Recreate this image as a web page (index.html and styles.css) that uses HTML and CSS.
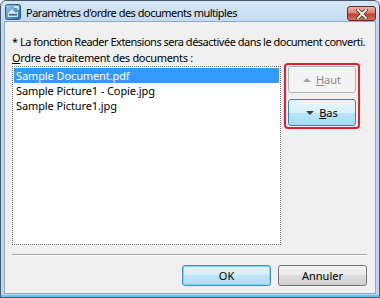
FILE: index.html
```html
<!DOCTYPE html>
<html lang="fr">
  <head>
    <meta charset="UTF-8" />
    <meta name="viewport" content="width=device-width, initial-scale=1.0" />
    <title>Paramètres d'ordre des documents multiples</title>
    <link rel="stylesheet" href="styles.css">
  </head>
  <body>
    <div class="window">
      <div class="titlebar">
        <svg class="app-icon" width="16" height="16" viewBox="0 0 16 16">
          <defs>
            <linearGradient id="ig" x1="0" y1="0" x2="1" y2="1">
              <stop offset="0" stop-color="#9fd0f4" />
              <stop offset="1" stop-color="#1f5fa8" />
            </linearGradient>
          </defs>
          <rect x="0.5" y="0.5" width="15" height="15" rx="2" fill="url(#ig)" stroke="#2a5a8c" />
          <path d="M3 9 L7 5 L11 9 L13 7 L13 13 L3 13 Z" fill="#e8f2fb" opacity="0.85" />
          <rect x="4" y="10" width="8" height="1.5" fill="#2a5a8c" />
          <path d="M9 3 L13 3 L13 6" fill="none" stroke="#ffffff" stroke-width="1.3" />
        </svg>
        <span class="title">Paramètres d'ordre des documents multiples</span>
        <div class="close-btn">
          <svg width="12" height="10" viewBox="0 0 12 10">
            <path d="M2 1 L10 9 M10 1 L2 9" stroke="#5a2a22" stroke-width="3.4" stroke-linecap="square" />
            <path d="M2 1 L10 9 M10 1 L2 9" stroke="#ffffff" stroke-width="1.8" stroke-linecap="square" />
          </svg>
        </div>
      </div>

      <div class="client">
        <p class="note">* La fonction Reader Extensions sera désactivée dans le document converti.</p>
        <p class="label"><u>O</u>rdre de traitement des documents :</p>

        <div class="main-row">
          <ul class="doc-list">
            <li class="selected">Sample Document.pdf</li>
            <li>Sample Picture1 - Copie.jpg</li>
            <li>Sample Picture1.jpg</li>
          </ul>

          <div class="move-group">
            <button class="move-btn" disabled>
              <span class="arrow up"></span><span><u>H</u>aut</span>
            </button>
            <button class="move-btn hover">
              <span class="arrow down"></span><span><u>B</u>as</span>
            </button>
          </div>
        </div>

        <div class="separator"></div>

        <div class="footer">
          <button class="btn default">OK</button>
          <button class="btn">Annuler</button>
        </div>
      </div>
    </div>
  </body>
</html>
```

FILE: styles.css
```css
/* Reset */
* {
  margin: 0;
  padding: 0;
  box-sizing: border-box;
}

body {
  background-color: #ffffff;
  font-family: "Noto Sans", "Liberation Sans", sans-serif;
  font-size: 11px;
  color: #000;
}

/* Window frame */
.window {
  width: 380px;
  height: 298px;
  border: 1px solid #4b5a6a;
  border-radius: 6px 6px 0 0;
  background: linear-gradient(#d6e6f7, #bcd6ef 30px, #bcd6ef);
  display: flex;
  flex-direction: column;
  padding: 0 3px 3px 3px;
  box-shadow: inset 0 -2px 0 #62c6ec;
}

.titlebar {
  height: 20px;
  display: flex;
  align-items: center;
  padding-left: 1px;
}

.app-icon {
  flex: none;
  margin-top: 2px;
}

.title {
  flex: 1;
  margin-left: 5px;
  margin-top: 2px;
  font-size: 11px;
  letter-spacing: -0.5px;
  color: #000;
}

.close-btn {
  width: 29px;
  height: 15px;
  margin-top: 5px;
  border: 1px solid #6a2a20;
  border-radius: 3px;
  background: linear-gradient(#eab4a6, #d9836f 45%, #c4402c 55%, #d7705c);
  display: flex;
  justify-content: center;
  align-items: center;
}

/* Client area */
.client {
  flex: 1;
  background-color: #f0f0f0;
  border: 1px solid #8fa9c5;
  padding: 12px 8px 7px 7px;
  display: flex;
  flex-direction: column;
}

.note,
.label {
  line-height: 16px;
  white-space: nowrap;
}

.note {
  letter-spacing: -0.5px;
}

.label {
  letter-spacing: -0.3px;
}

.main-row {
  display: flex;
  gap: 3px;
}

.doc-list {
  list-style: none;
  width: 269px;
  height: 179px;
  background-color: #ffffff;
  border: 1px dotted #6e6e6e;
  padding: 1px;
}

.doc-list li {
  height: 15px;
  line-height: 15px;
  padding-left: 2px;
  letter-spacing: -0.1px;
}

.doc-list li.selected {
  background-color: #3399ff;
  color: #ffffff;
}

/* Haut / Bas */
.move-group {
  align-self: flex-start;
  margin-top: -3px;
  border: 2px solid #e2202a;
  border-radius: 4px;
  padding: 1px 2px;
  display: flex;
  flex-direction: column;
  gap: 6px;
}

.move-btn {
  width: 68px;
  height: 27px;
  font-family: inherit;
  font-size: 11px;
  border: 1px solid #707070;
  border-radius: 3px;
  display: flex;
  align-items: center;
  justify-content: center;
  gap: 5px;
  color: #000;
}

.move-btn:disabled {
  border-color: #adb2b5;
  background-color: #f4f4f4;
  color: #8a8a8a;
}

.move-btn.hover {
  border-color: #3c7fb1;
  background: linear-gradient(#eaf6fd, #d9f0fc 50%, #bee6fd 50%, #a7d9f5);
}

.arrow {
  width: 0;
  height: 0;
  border-left: 4px solid transparent;
  border-right: 4px solid transparent;
}

.arrow.up {
  border-bottom: 4px solid #a0a0a0;
}

.arrow.down {
  border-top: 4px solid #404040;
}

.separator {
  margin-top: 9px;
  height: 2px;
  border-top: 1px solid #a0a0a0;
  border-bottom: 1px solid #ffffff;
}

/* Footer buttons */
.footer {
  margin-top: 9px;
  display: flex;
  justify-content: flex-end;
  gap: 7px;
}

.btn {
  width: 89px;
  height: 21px;
  font-family: inherit;
  font-size: 11px;
  border: 1px solid #707070;
  border-radius: 3px;
  background: linear-gradient(#f2f2f2, #ebebeb 50%, #dddddd 50%, #cfcfcf);
  color: #000;
}

.btn.default {
  border-color: #3c8fc8;
  background: linear-gradient(#e5f4fc, #d4eefb 50%, #bfe5f8 50%, #b0dcf3);
  box-shadow: inset 0 0 0 1px #7fd0f5;
}
```
